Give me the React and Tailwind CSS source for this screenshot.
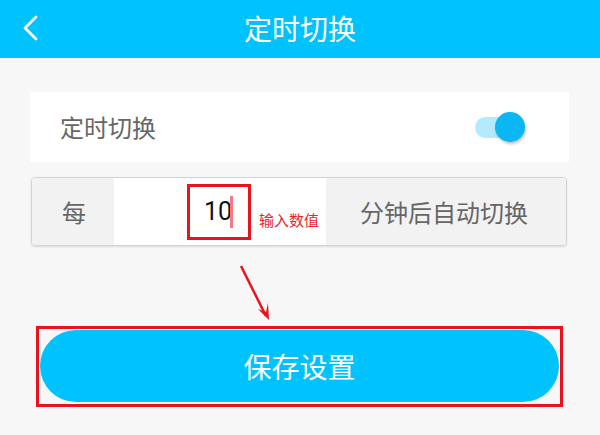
import { useState } from "react";

const font = { fontFamily: '"Noto Sans CJK SC", "Noto Sans", sans-serif' };

const Toggle = ({ on, onChange }) => (
  <button
    type="button"
    onClick={() => onChange(!on)}
    className="relative w-[52px] h-[32px] flex items-center"
  >
    <span className="absolute left-[2px] right-[2px] h-[21px] rounded-full bg-[#b5e9fd]" />
    <span
      className={
        "absolute top-[1px] w-[30px] h-[30px] rounded-full bg-[#0ab7f3] shadow-[1px_2px_3px_rgba(0,0,0,0.25)] " +
        (on ? "right-0" : "left-0")
      }
    />
  </button>
);

export default function App() {
  const [on, setOn] = useState(true);
  const [minutes, setMinutes] = useState("10");

  return (
    <div className="w-[600px] h-[435px] bg-[#f7f7f7] overflow-hidden relative" style={font}>
      {/* header */}
      <div className="h-[58px] bg-[#00c3fe] flex items-center relative">
        <svg className="absolute left-[20px] top-[13px]" width="22" height="30" viewBox="0 0 22 30">
          <path d="M16 4 L5 15 L16 26" fill="none" stroke="white" strokeWidth="2.8" strokeLinecap="round" strokeLinejoin="round" />
        </svg>
        <div className="flex-1 text-center text-white text-[28px] leading-none pb-[2px]">定时切换</div>
      </div>

      {/* switch row */}
      <div className="mt-[34px] ml-[30px] mr-[31px] h-[70px] bg-white flex items-center justify-between pl-[30px] pr-[44px]">
        <span className="text-[24px] text-[#666] leading-none">定时切换</span>
        <Toggle on={on} onChange={setOn} />
      </div>

      {/* interval row */}
      <div className="mt-[15px] ml-[31px] mr-[33px] h-[69px] flex border border-[#d4d4d4] rounded-[4px] shadow-[0_1px_2px_rgba(0,0,0,0.12)] overflow-hidden">
        <div className="w-[82px] bg-[#f2f2f2] flex items-center pl-[30px] text-[24px] text-[#666]">每</div>
        <div className="w-[212px] bg-white flex items-center">
          <div className="ml-[73px] w-[64px] h-[56px] border-[3px] border-[#e8141c] flex items-center pl-[14px]">
            <input
              value={minutes}
              onChange={(e) => setMinutes(e.target.value)}
              className="w-[28px] bg-transparent outline-none text-[25px] text-[#111] leading-none"
              style={{ fontFamily: 'Roboto, "Noto Sans", sans-serif' }}
            />
            <span className="w-[3px] h-[32px] bg-[#f47b86] -ml-[2px]" />
          </div>
          <span className="ml-[8px] mt-[16px] text-[15px] text-[#e8262b] leading-none whitespace-nowrap">输入数值</span>
        </div>
        <div className="flex-1 bg-[#f2f2f2] flex items-center pl-[34px] text-[24px] text-[#666] whitespace-nowrap">分钟后自动切换</div>
      </div>

      {/* arrow */}
      <svg className="absolute left-[234px] top-[262px]" width="44" height="64" viewBox="0 0 44 64">
        <path d="M7 4 L32 54" stroke="#e8141c" strokeWidth="2.5" fill="none" />
        <path d="M35 58 L24 47 L32 50 L34 41 Z" fill="#e8141c" />
      </svg>

      {/* save button */}
      <div className="mt-[80px] ml-[36px] mr-[37px] h-[81px] border-[3px] border-[#e8141c] p-[1px]">
        <button
          type="button"
          className="w-full h-[72px] rounded-full bg-[#00c3fe] text-white text-[28px] leading-none"
        >
          保存设置
        </button>
      </div>
    </div>
  );
}
